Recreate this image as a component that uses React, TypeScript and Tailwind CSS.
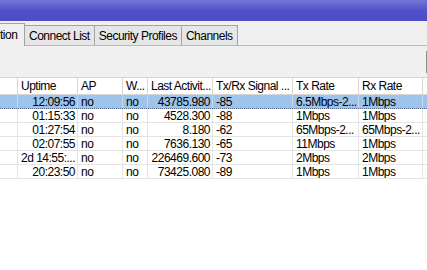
import React from "react";

const cols = [
  { w: "w-[18px]", label: "", right: false },
  { w: "w-[60px]", label: "Uptime", right: true },
  { w: "w-[45px]", label: "AP", right: false },
  { w: "w-[25px]", label: "W...", right: false },
  { w: "w-[65px]", label: "Last Activit...", right: true },
  { w: "w-[80px]", label: "Tx/Rx Signal ...", right: false },
  { w: "w-[66px]", label: "Tx Rate", right: false },
  { w: "w-[64px]", label: "Rx Rate", right: false },
  { w: "w-[20px]", label: "", right: false },
];

const rows = [
  ["", "12:09:56", "no", "no", "43785.980", "-85", "6.5Mbps-2...", "1Mbps", ""],
  ["", "01:15:33", "no", "no", "4528.300", "-88", "1Mbps", "1Mbps", ""],
  ["", "01:27:54", "no", "no", "8.180", "-62", "65Mbps-2...", "65Mbps-2...", ""],
  ["", "02:07:55", "no", "no", "7636.130", "-65", "11Mbps", "1Mbps", ""],
  ["", "2d 14:55:...", "no", "no", "226469.600", "-73", "2Mbps", "2Mbps", ""],
  ["", "20:23:50", "no", "no", "73425.080", "-89", "1Mbps", "1Mbps", ""],
];

function Tab({ label }: { label: string }) {
  return (
    <div className="h-[20px] -ml-px border border-b-0 border-[#a3a3a3] bg-[#e6e6e6] px-[4px] flex items-center whitespace-nowrap">
      {label}
    </div>
  );
}

export default function App() {
  return (
    <div className="w-[427px] h-[270px] overflow-hidden bg-white text-black text-[12px] tracking-[-0.5px] leading-none font-['Liberation_Sans',Arial,sans-serif]">
      {/* title bar */}
      <div className="h-[21px] bg-gradient-to-b from-[#7676d8] via-[#5151c9] to-[#4c4cc6]" />

      {/* tabs + toolbar */}
      <div className="bg-[#f0f0f0]">
        <div className="h-[25px] flex items-end border-b border-[#b9b9b9]">
          <div className="h-[23px] w-[25px] -mb-px bg-[#f0f0f0] border-r border-t border-[#a3a3a3] flex items-center pr-[3px] relative z-10">
            <span className="whitespace-nowrap">tion</span>
          </div>
          <Tab label="Connect List" />
          <Tab label="Security Profiles" />
          <Tab label="Channels" />
        </div>
        <div className="h-[31px] flex items-center justify-end">
          <div className="h-[22px] w-px bg-[#8f8f8f]" />
        </div>
      </div>

      {/* table */}
      <div className="border-t border-[#d6d6d6]">
        <div className="flex h-[17px] border-b border-[#d6d6d6] bg-white">
          {cols.map((c, i) => (
            <div
              key={i}
              className={`${c.w} shrink-0 h-full border-r border-[#d6d6d6] flex items-center pl-[3px] whitespace-nowrap overflow-hidden`}
            >
              {c.label}
            </div>
          ))}
        </div>
        {rows.map((r, ri) => (
          <div
            key={ri}
            className={
              ri === 0
                ? "flex h-[14px] bg-[#9ec4ec] border-b border-dotted border-[#5a6f90]"
                : "flex h-[14px] border-b border-[#e4e4e4]"
            }
          >
            {r.map((v, ci) => (
              <div
                key={ci}
                className={`${cols[ci].w} shrink-0 h-full border-r ${ri === 0 ? "border-[#c4daf2]" : "border-[#e4e4e4]"} flex items-center whitespace-nowrap overflow-hidden ${
                  cols[ci].right ? "justify-end pr-[2px]" : "pl-[3px]"
                }`}
              >
                {v}
              </div>
            ))}
          </div>
        ))}
      </div>
    </div>
  );
}
